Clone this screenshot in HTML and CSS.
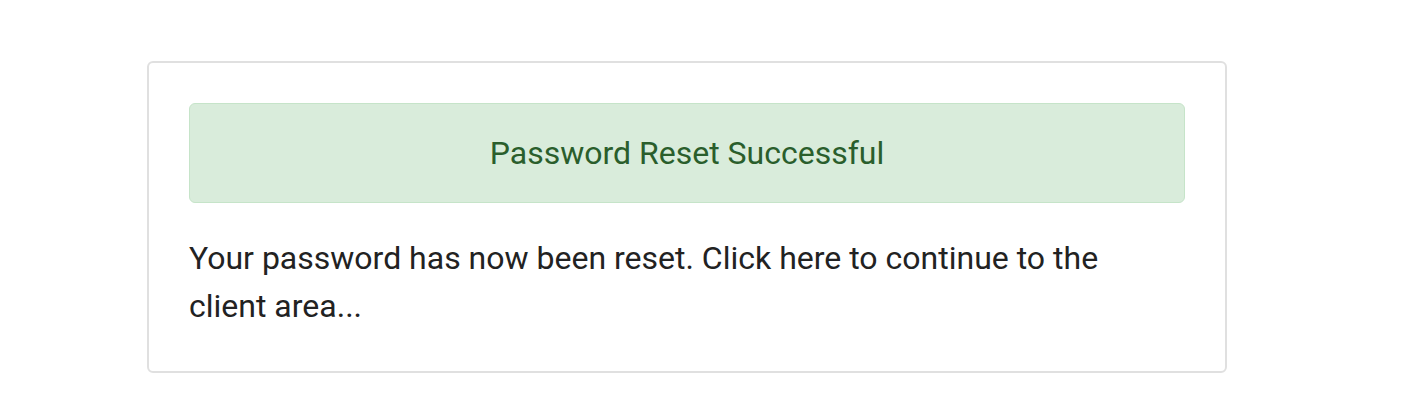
FILE: index.html
```html
<!DOCTYPE html>
<html>
<head>
<meta charset="utf-8">
<link rel="stylesheet" href="styles.css">
</head>
<body>
<div class="page">
  <div class="card">
    <div class="alert">Password Reset Successful</div>
    <p class="message">Your password has now been reset. Click here to continue to the client area...</p>
  </div>
</div>
</body>
</html>
```
FILE: styles.css
```css
html, body {
  margin: 0;
  padding: 0;
  background: #fff;
}
.page {
  padding: 61px 0 0 147px;
}
.card {
  box-sizing: border-box;
  width: 1080px;
  height: 312px;
  border: 2px solid #e0e0e0;
  border-radius: 6px;
  padding: 40px 40px 0 40px;
  font-family: Roboto, "Liberation Sans", sans-serif;
}
.alert {
  box-sizing: border-box;
  height: 100px;
  width: 996px;
  background: #d9ecdb;
  border: 1px solid #c6e4c9;
  border-radius: 6px;
  color: #2a5e2c;
  font-size: 32px;
  display: flex;
  align-items: center;
  justify-content: center;
}
.message {
  margin: 31px 0 0 0;
  font-size: 32px;
  line-height: 48px;
  color: #222;
  max-width: 960px;
}
```
